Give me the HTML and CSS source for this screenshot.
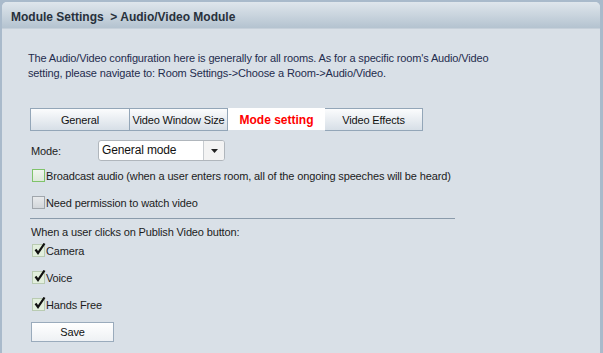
FILE: index.html
```html
<!DOCTYPE html>
<html>
<head>
<meta charset="utf-8">
<link rel="stylesheet" href="styles.css">
</head>
<body>
<div class="panel">
  <div class="header">Module Settings &nbsp;&gt; Audio/Video Module</div>
  <div class="content">
    <p class="intro">The Audio/Video configuration here is generally for all rooms. As for a specific room's Audio/Video<br>setting, please navigate to: Room Settings-&gt;Choose a Room-&gt;Audio/Video.</p>
    <div class="tabs">
      <div class="tab">General</div>
      <div class="tab">Video Window Size</div>
      <div class="tab active">Mode setting</div>
      <div class="tab">Video Effects</div>
    </div>
    <div class="mode-row">
      <span class="mode-label">Mode:</span>
      <div class="select">
        <span class="select-text">General mode</span>
        <span class="select-btn"><svg width="7" height="4" viewBox="0 0 7 4"><path d="M0 0h7L3.5 4z" fill="#222"/></svg></span>
      </div>
    </div>
    <div class="check-row first"><span class="box hover"></span>Broadcast audio (when a user enters room, all of the ongoing speeches will be heard)</div>
    <div class="check-row"><span class="box"></span>Need permission to watch video</div>
    <div class="rule"></div>
    <div class="publish">When a user clicks on Publish Video button:</div>
    <div class="check-row after-publish"><span class="box checked"><svg width="12" height="12" viewBox="0 0 12 12"><path d="M1.5 6.5 L4 10 L10.5 0.5" stroke="#111" stroke-width="2.2" fill="none"/></svg></span>Camera</div>
    <div class="check-row"><span class="box checked"><svg width="12" height="12" viewBox="0 0 12 12"><path d="M1.5 6.5 L4 10 L10.5 0.5" stroke="#111" stroke-width="2.2" fill="none"/></svg></span>Voice</div>
    <div class="check-row"><span class="box checked"><svg width="12" height="12" viewBox="0 0 12 12"><path d="M1.5 6.5 L4 10 L10.5 0.5" stroke="#111" stroke-width="2.2" fill="none"/></svg></span>Hands Free</div>
    <div class="save">Save</div>
  </div>
</div>
</body>
</html>
```
FILE: styles.css
```css
html, body {
  margin: 0;
  padding: 0;
  height: 100%;
  background: #a9bacb;
  overflow: hidden;
}
body {
  font-family: "Liberation Sans", Arial, sans-serif;
  font-size: 11px;
  letter-spacing: -0.14px;
  color: #222;
}
.panel {
  margin: 2px 3px 0 2px;
  height: 351px;
  background: #d9e0e7;
  border-radius: 5px 5px 0 0;
  overflow: hidden;
}
.header {
  height: 27px;
  box-sizing: border-box;
  padding: 8px 0 0 9px;
  font-weight: bold;
  font-size: 12px;
  letter-spacing: 0;
  color: #28313c;
  background: linear-gradient(#dfe6ec, #b4c3d0);
  border-bottom: 1px solid #c6d0da;
}
.content {
  padding: 0 0 0 26px;
}
.intro {
  margin: 22px 0 0 0;
  line-height: 15px;
  color: #1f2c4e;
}
.tabs {
  display: flex;
  margin: 27px 0 0 2px;
  height: 23px;
}
.tab {
  width: 98px;
  box-sizing: border-box;
  height: 23px;
  border: 1px solid #93a6b8;
  border-left: none;
  background: linear-gradient(#fbfcfd, #d7dfe7);
  text-align: center;
  line-height: 23px;
  color: #111;
}
.tab:first-child {
  width: 100px;
  border-left: 1px solid #93a6b8;
}
.tab.active {
  background: #fff;
  color: #f00;
  font-weight: bold;
  font-size: 12px;
  letter-spacing: 0;
  border: none;
  height: 22px;
  width: 97px;
  line-height: 24px;
}
.mode-row {
  display: flex;
  align-items: center;
  margin-top: 9px;
  height: 21px;
}
.mode-label {
  width: 67px;
  padding-left: 3px;
  color: #222;
}
.select {
  display: flex;
  width: 127px;
  height: 21px;
  box-sizing: border-box;
  border: 1px solid #b0b6bc;
  border-radius: 3px;
  background: #fff;
  overflow: hidden;
}
.select-text {
  flex: 1;
  line-height: 19px;
  padding-left: 3px;
  font-size: 12px;
  color: #111;
}
.select-btn {
  width: 20px;
  border-left: 1px solid #c8ccd0;
  background: #f3f3f3;
  display: flex;
  align-items: center;
  justify-content: center;
}
.check-row {
  display: flex;
  align-items: center;
  height: 13px;
  margin-top: 14px;
  padding-left: 4px;
  color: #1c1c1c;
}
.check-row.first {
  margin-top: 8px;
}
.check-row.after-publish {
  margin-top: 5px;
}
.box {
  width: 11px;
  height: 11px;
  border: 1px solid #a0a6ac;
  background: linear-gradient(#e8eaec, #d2d6da);
  margin-right: 1px;
  position: relative;
  flex: none;
}
.box.hover {
  border-color: #7fc36a;
  background: linear-gradient(#f0f6ee, #dde8da);
}
.box.checked {
  border-color: #b9cbb2;
  background: #e2efdd;
}
.box svg {
  position: absolute;
  left: 1px;
  top: -2px;
}
.rule {
  margin: 9px 0 0 2px;
  width: 425px;
  height: 1px;
  background: #8a9bab;
}
.publish {
  margin: 7px 0 0 3px;
  color: #1c1c1c;
  height: 13px;
}
.save {
  margin: 11px 0 0 3px;
  width: 83px;
  height: 20px;
  box-sizing: border-box;
  border: 1px solid #9aabbc;
  background: linear-gradient(#ffffff, #eef1f4);
  text-align: center;
  line-height: 18px;
  color: #111;
}
```
